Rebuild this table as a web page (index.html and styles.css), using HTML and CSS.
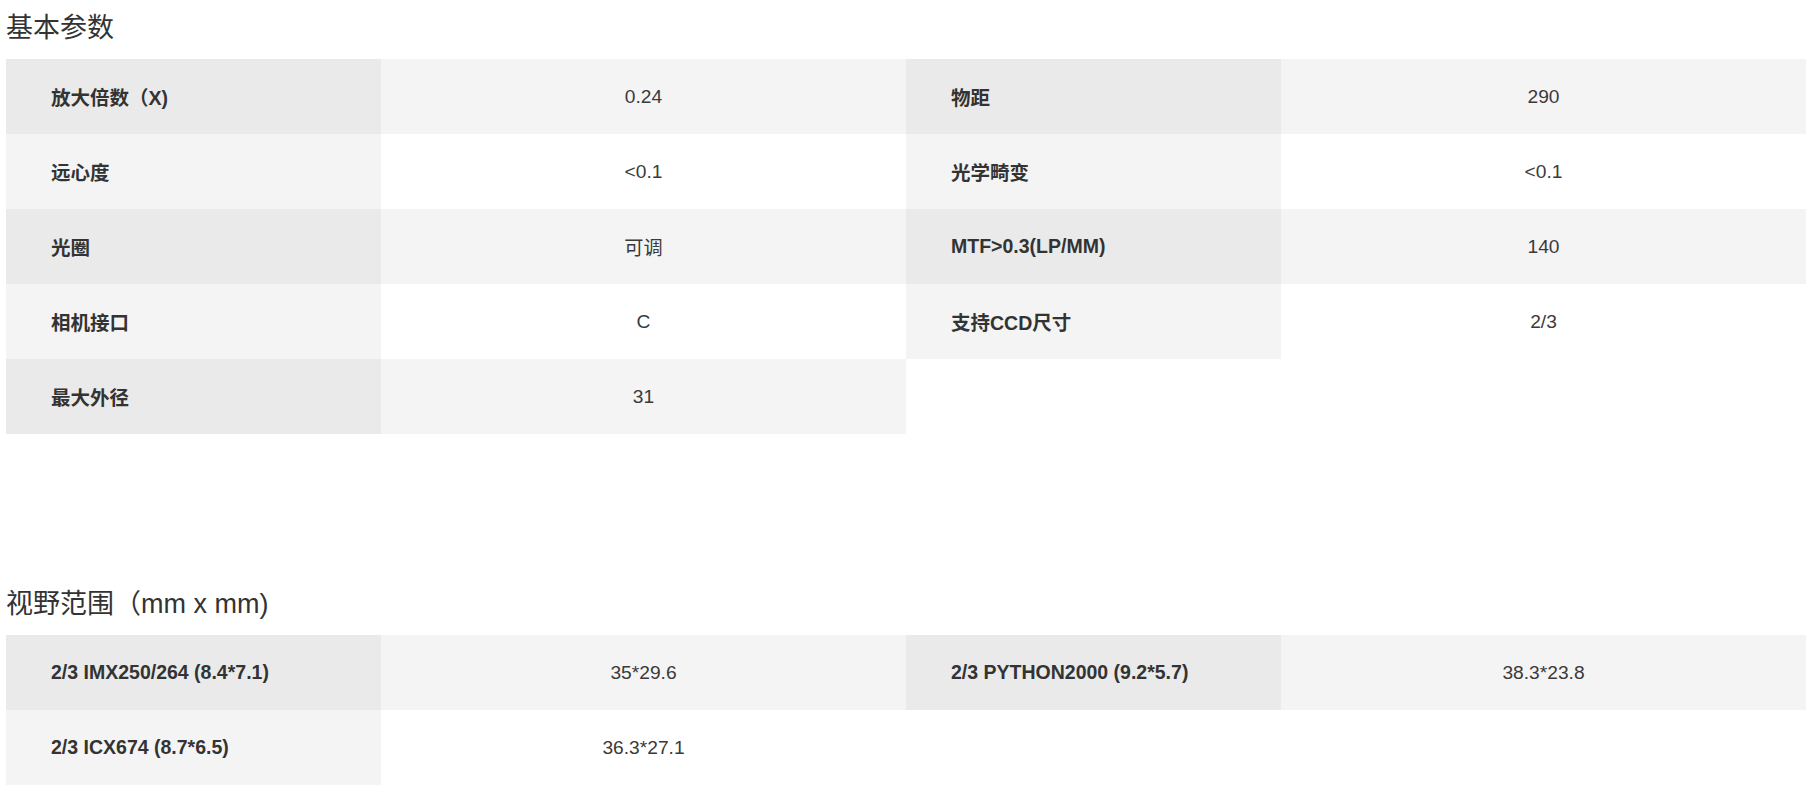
FILE: index.html
```html
<!DOCTYPE html>
<html lang="zh-CN">
<head>
<meta charset="utf-8">
<title>基本参数</title>
<link rel="stylesheet" href="styles.css">
</head>
<body>
<div class="page">
  <section class="spec">
    <h2 class="spec-title">基本参数</h2>
    <ul class="spec-grid">
      <li class="spec-item"><span class="spec-label">放大倍数（X)</span><span class="spec-value">0.24</span></li>
      <li class="spec-item"><span class="spec-label">物距</span><span class="spec-value">290</span></li>
      <li class="spec-item"><span class="spec-label">远心度</span><span class="spec-value">&lt;0.1</span></li>
      <li class="spec-item"><span class="spec-label">光学畸变</span><span class="spec-value">&lt;0.1</span></li>
      <li class="spec-item"><span class="spec-label">光圈</span><span class="spec-value">可调</span></li>
      <li class="spec-item"><span class="spec-label">MTF&gt;0.3(LP/MM)</span><span class="spec-value">140</span></li>
      <li class="spec-item"><span class="spec-label">相机接口</span><span class="spec-value">C</span></li>
      <li class="spec-item"><span class="spec-label">支持CCD尺寸</span><span class="spec-value">2/3</span></li>
      <li class="spec-item"><span class="spec-label">最大外径</span><span class="spec-value">31</span></li>
    </ul>
  </section>
  <section class="spec spec-second">
    <h2 class="spec-title">视野范围（mm x mm)</h2>
    <ul class="spec-grid">
      <li class="spec-item"><span class="spec-label">2/3 IMX250/264 (8.4*7.1)</span><span class="spec-value">35*29.6</span></li>
      <li class="spec-item"><span class="spec-label">2/3 PYTHON2000 (9.2*5.7)</span><span class="spec-value">38.3*23.8</span></li>
      <li class="spec-item"><span class="spec-label">2/3 ICX674 (8.7*6.5)</span><span class="spec-value">36.3*27.1</span></li>
    </ul>
  </section>
</div>
</body>
</html>
```
FILE: styles.css
```css
html, body {
  margin: 0;
  padding: 0;
  background: #ffffff;
}

body {
  font-family: "Liberation Sans", "Noto Sans CJK SC", sans-serif;
  color: #333333;
}

.page {
  width: 1800px;
  padding-left: 6px;
}

.spec-title {
  margin: 0;
  padding-top: 8px;
  margin-bottom: 11px;
  font-size: 27px;
  line-height: 40px;
  font-weight: normal;
  color: #333333;
}

.spec-second {
  margin-top: 143px;
}

.spec-second .spec-title {
  padding-top: 7px;
  margin-bottom: 11px;
}

.spec-grid {
  list-style: none;
  margin: 0;
  padding: 0;
  display: grid;
  grid-template-columns: 1fr 1fr;
}

.spec-item {
  display: flex;
  height: 75px;
  font-size: 19.2px;
}

.spec-label {
  width: 375px;
  flex: none;
  display: flex;
  align-items: center;
  padding-left: 45px;
  box-sizing: border-box;
  font-size: 19.5px;
  font-weight: bold;
  color: #333333;
  background: #f4f4f4;
}

.spec-value {
  flex: 1;
  display: flex;
  align-items: center;
  justify-content: center;
  color: #3a3a3a;
  background: #ffffff;
}

.spec-item:nth-child(4n+1) .spec-label,
.spec-item:nth-child(4n+2) .spec-label {
  background: #eaeaea;
}

.spec-item:nth-child(4n+1) .spec-value,
.spec-item:nth-child(4n+2) .spec-value {
  background: #f4f4f4;
}
```
